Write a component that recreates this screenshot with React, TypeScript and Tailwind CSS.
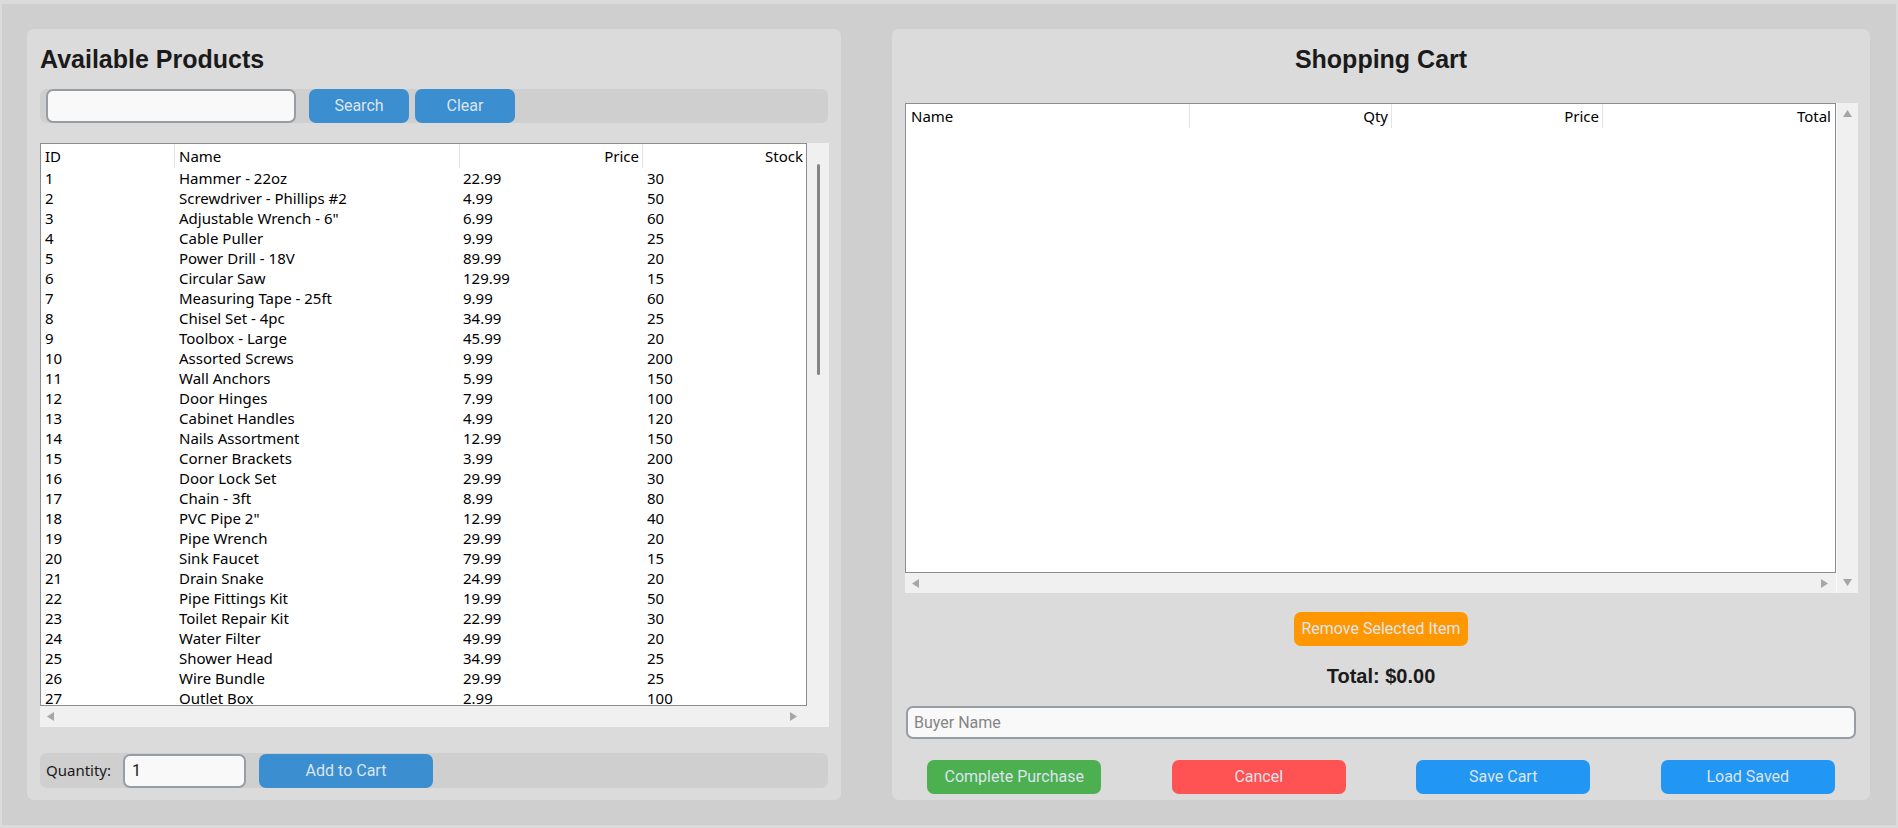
import React from "react";

const products: [string, string, string, string][] = [
  ["1", "Hammer - 22oz", "22.99", "30"],
  ["2", "Screwdriver - Phillips #2", "4.99", "50"],
  ["3", "Adjustable Wrench - 6\"", "6.99", "60"],
  ["4", "Cable Puller", "9.99", "25"],
  ["5", "Power Drill - 18V", "89.99", "20"],
  ["6", "Circular Saw", "129.99", "15"],
  ["7", "Measuring Tape - 25ft", "9.99", "60"],
  ["8", "Chisel Set - 4pc", "34.99", "25"],
  ["9", "Toolbox - Large", "45.99", "20"],
  ["10", "Assorted Screws", "9.99", "200"],
  ["11", "Wall Anchors", "5.99", "150"],
  ["12", "Door Hinges", "7.99", "100"],
  ["13", "Cabinet Handles", "4.99", "120"],
  ["14", "Nails Assortment", "12.99", "150"],
  ["15", "Corner Brackets", "3.99", "200"],
  ["16", "Door Lock Set", "29.99", "30"],
  ["17", "Chain - 3ft", "8.99", "80"],
  ["18", "PVC Pipe 2\"", "12.99", "40"],
  ["19", "Pipe Wrench", "29.99", "20"],
  ["20", "Sink Faucet", "79.99", "15"],
  ["21", "Drain Snake", "24.99", "20"],
  ["22", "Pipe Fittings Kit", "19.99", "50"],
  ["23", "Toilet Repair Kit", "22.99", "30"],
  ["24", "Water Filter", "49.99", "20"],
  ["25", "Shower Head", "34.99", "25"],
  ["26", "Wire Bundle", "29.99", "25"],
  ["27", "Outlet Box", "2.99", "100"],
];

const tableFont = { fontFamily: '"Noto Sans", "Open Sans", sans-serif' };
const roboto = { fontFamily: 'Roboto, "Noto Sans", sans-serif' };
const arial = { fontFamily: '"Liberation Sans", Arial, sans-serif' };

function Tri({ dir }: { dir: "up" | "down" | "left" | "right" }) {
  const pts =
    dir === "up"
      ? "4.5,0 9,7 0,7"
      : dir === "down"
      ? "0,0 9,0 4.5,7"
      : dir === "left"
      ? "7,0 7,9 0,4.5"
      : "0,0 7,4.5 0,9";
  const w = dir === "up" || dir === "down" ? 9 : 7;
  const h = dir === "up" || dir === "down" ? 7 : 9;
  return (
    <svg width={w} height={h} viewBox={`0 0 ${w} ${h}`}>
      <polygon points={pts} fill="#a6a6a6" />
    </svg>
  );
}

function Btn({ children, className }: { children: React.ReactNode; className: string }) {
  return (
    <div
      className={`h-[34px] rounded-[7px] flex items-center justify-center text-[16px] text-[#dce4ee] ${className}`}
      style={roboto}
    >
      {children}
    </div>
  );
}

export default function App() {
  return (
    <div className="w-[1898px] h-[828px] bg-[#dbdbdb] pt-[4px] pl-[2px] pr-[2px] pb-[3px]">
      <div className="w-full h-full bg-[#cfcfcf] flex pl-[25px] pt-[25px] pr-[26px] pb-[25px] gap-[51px]">
        {/* Left panel */}
        <div className="w-[814px] h-[771px] bg-[#dbdbdb] rounded-[7px] px-[13px] pt-[16px] flex flex-col">
          <div className="h-[29px] leading-[29px] text-[25px] font-bold text-[#1a1a1a]" style={arial}>
            Available Products
          </div>
          <div className="mt-[15px] h-[34px] w-[788px] bg-[#cfcfcf] rounded-[7px] flex items-center pl-[6px]">
            <div className="w-[250px] h-[34px] bg-[#f9f9f9] border-2 border-[#979da2] rounded-[7px]" />
            <Btn className="ml-[13px] w-[100px] bg-[#3b8ed0]">Search</Btn>
            <Btn className="ml-[6px] w-[100px] bg-[#3b8ed0]">Clear</Btn>
          </div>

          {/* Table */}
          <div className="mt-[20px] w-[789px] h-[584px] flex flex-col" style={tableFont}>
            <div className="flex h-[563px]">
              <div className="w-[767px] h-[563px] border border-[#8a8d92] bg-white overflow-hidden text-[15px] text-black">
                <div className="flex h-[24px] leading-[25px]">
                  <div className="w-[133px] pl-[4px]">ID</div>
                  <div className="w-[285px] pl-[4px] border-l border-[#e5e5e5]">Name</div>
                  <div className="w-[183px] pr-[3px] border-l border-[#e5e5e5] text-right">Price</div>
                  <div className="w-[164px] pr-[3px] border-l border-[#e5e5e5] text-right">Stock</div>
                </div>
                {products.map((p) => (
                  <div key={p[0]} className="flex h-[20px] leading-[20px] whitespace-nowrap">
                    <div className="w-[133px] pl-[4px]">{p[0]}</div>
                    <div className="w-[285px] pl-[5px]">{p[1]}</div>
                    <div className="w-[183px] pl-[4px]">{p[2]}</div>
                    <div className="w-[164px] pl-[5px]">{p[3]}</div>
                  </div>
                ))}
              </div>
              <div className="w-[22px] h-[563px] bg-[#f0f0f0] pt-[21px] pl-[10px]">
                <div className="w-[3px] h-[211px] bg-[#858585] rounded-full" />
              </div>
            </div>
            <div className="h-[21px] bg-[#f0f0f0] flex items-center justify-between pl-[7px] pr-[32px]">
              <Tri dir="left" />
              <Tri dir="right" />
            </div>
          </div>

          <div className="mt-[26px] h-[35px] w-[788px] bg-[#cfcfcf] rounded-[7px] flex items-center pl-[6px]">
            <div className="w-[77px] text-[15px] text-[#1a1a1a]" style={tableFont}>
              Quantity:
            </div>
            <div
              className="w-[123px] h-[34px] bg-[#f9f9f9] border-2 border-[#979da2] rounded-[7px] flex items-center pl-[7px] text-[16px] text-[#1a1a1a]"
              style={roboto}
            >
              1
            </div>
            <Btn className="ml-[13px] w-[174px] bg-[#3b8ed0]">Add to Cart</Btn>
          </div>
        </div>

        {/* Right panel */}
        <div className="w-[978px] h-[771px] bg-[#dbdbdb] rounded-[7px] pt-[16px] flex flex-col">
          <div className="h-[29px] leading-[29px] text-[25px] font-bold text-[#1a1a1a] text-center" style={arial}>
            Shopping Cart
          </div>

          <div className="mt-[29px] ml-[13px] w-[953px] h-[490px] flex" style={tableFont}>
            <div className="w-[931px] flex flex-col">
              <div className="h-[470px] border border-[#8a8d92] bg-white text-[15px] text-black">
                <div className="flex h-[24px] leading-[25px]">
                  <div className="w-[283px] pl-[5px]">Name</div>
                  <div className="w-[202px] pr-[3px] border-l border-[#e5e5e5] text-right">Qty</div>
                  <div className="w-[211px] pr-[3px] border-l border-[#e5e5e5] text-right">Price</div>
                  <div className="w-[233px] pr-[4px] border-l border-[#e5e5e5] text-right">Total</div>
                </div>
              </div>
              <div className="h-[20px] bg-[#f0f0f0] flex items-center justify-between pl-[7px] pr-[8px]">
                <Tri dir="left" />
                <Tri dir="right" />
              </div>
            </div>
            <div className="w-[22px] h-[490px] bg-[#f0f0f0] border-l border-[#fafafa] flex flex-col items-center justify-between pt-[7px] pb-[7px]">
              <Tri dir="up" />
              <Tri dir="down" />
            </div>
          </div>

          <div className="mt-[19px] flex justify-center">
            <Btn className="w-[174px] bg-[#ff9800]">Remove Selected Item</Btn>
          </div>

          <div className="mt-[19px] h-[23px] leading-[23px] text-[20px] font-bold text-[#1a1a1a] text-center" style={arial}>
            Total: $0.00
          </div>

          <div
            className="mt-[18px] ml-[14px] w-[950px] h-[33px] bg-[#f9f9f9] border-2 border-[#979da2] rounded-[7px] flex items-center pl-[6px] text-[16px] text-[#858585]"
            style={roboto}
          >
            Buyer Name
          </div>

          <div className="mt-[21px] grid grid-cols-4">
            <div className="flex justify-center">
              <Btn className="w-[174px] bg-[#4caf50]">Complete Purchase</Btn>
            </div>
            <div className="flex justify-center">
              <Btn className="w-[174px] bg-[#ff5252]">Cancel</Btn>
            </div>
            <div className="flex justify-center">
              <Btn className="w-[174px] bg-[#2196f3]">Save Cart</Btn>
            </div>
            <div className="flex justify-center">
              <Btn className="w-[174px] bg-[#2196f3]">Load Saved</Btn>
            </div>
          </div>
        </div>
      </div>
    </div>
  );
}
